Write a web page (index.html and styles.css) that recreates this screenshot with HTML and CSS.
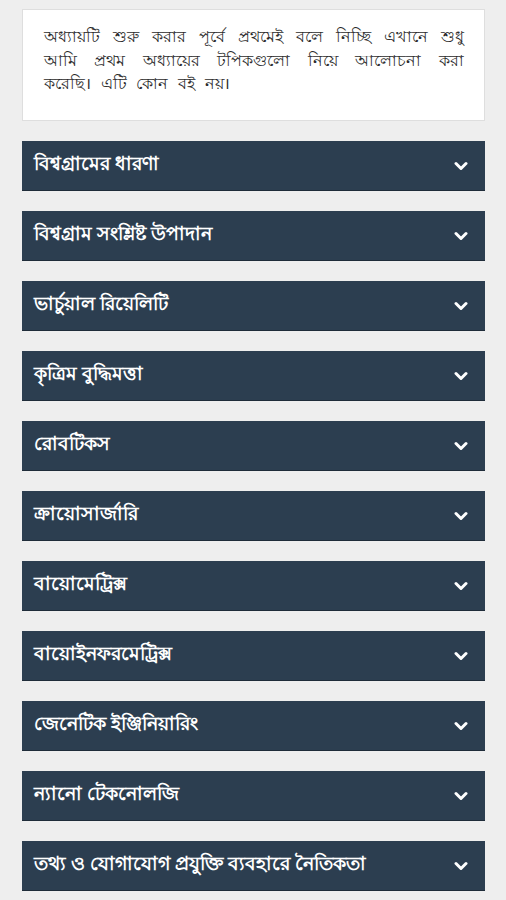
FILE: index.html
```html
<!DOCTYPE html>
<html lang="bn">
<head>
<meta charset="utf-8">
<link rel="stylesheet" href="styles.css">
</head>
<body>
<div class="page">
  <div class="intro">অধ্যায়টি শুরু করার পূর্বে প্রথমেই বলে নিচ্ছি এখানে শুধু আমি প্রথম অধ্যায়ের টপিকগুলো নিয়ে আলোচনা করা করেছি। এটি কোন বই নয়।</div>
  <div class="list">
    <div class="item"><span class="title">বিশ্বগ্রামের ধারণা</span><svg class="chev" viewBox="0 0 14 10"><path d="M2 2.5l5 5 5-5"/></svg></div>
    <div class="item"><span class="title">বিশ্বগ্রাম সংশ্লিষ্ট উপাদান</span><svg class="chev" viewBox="0 0 14 10"><path d="M2 2.5l5 5 5-5"/></svg></div>
    <div class="item"><span class="title">ভার্চুয়াল রিয়েলিটি</span><svg class="chev" viewBox="0 0 14 10"><path d="M2 2.5l5 5 5-5"/></svg></div>
    <div class="item"><span class="title">কৃত্রিম বুদ্ধিমত্তা</span><svg class="chev" viewBox="0 0 14 10"><path d="M2 2.5l5 5 5-5"/></svg></div>
    <div class="item"><span class="title">রোবটিকস</span><svg class="chev" viewBox="0 0 14 10"><path d="M2 2.5l5 5 5-5"/></svg></div>
    <div class="item"><span class="title">ক্রায়োসার্জারি</span><svg class="chev" viewBox="0 0 14 10"><path d="M2 2.5l5 5 5-5"/></svg></div>
    <div class="item"><span class="title">বায়োমেট্রিক্স</span><svg class="chev" viewBox="0 0 14 10"><path d="M2 2.5l5 5 5-5"/></svg></div>
    <div class="item"><span class="title">বায়োইনফরমেট্রিক্স</span><svg class="chev" viewBox="0 0 14 10"><path d="M2 2.5l5 5 5-5"/></svg></div>
    <div class="item"><span class="title">জেনেটিক ইঞ্জিনিয়ারিং</span><svg class="chev" viewBox="0 0 14 10"><path d="M2 2.5l5 5 5-5"/></svg></div>
    <div class="item"><span class="title">ন্যানো টেকনোলজি</span><svg class="chev" viewBox="0 0 14 10"><path d="M2 2.5l5 5 5-5"/></svg></div>
    <div class="item"><span class="title">তথ্য ও যোগাযোগ প্রযুক্তি ব্যবহারে নৈতিকতা</span><svg class="chev" viewBox="0 0 14 10"><path d="M2 2.5l5 5 5-5"/></svg></div>
  </div>
</div>
</body>
</html>
```
FILE: styles.css
```css
html, body {
  margin: 0;
  padding: 0;
  background: #eeeeee;
}
body {
  font-family: "Noto Sans", "Lato", sans-serif;
}
.page {
  padding: 9px 21px 0 22px;
}
.intro {
  background: #ffffff;
  border: 1px solid #dedede;
  padding: 15px 20px 16px 21px;
  font-size: 16px;
  line-height: 23.5px;
  word-spacing: 5.5px;
  color: #2b2b2b;
  text-align: justify;
  min-height: 79px;
}
.list {
  display: flex;
  flex-direction: column;
  gap: 20px;
  margin-top: 20px;
}
.item {
  height: 50px;
  background: #2c3e50;
  border-bottom: 1px solid #1f2c39;
  box-sizing: border-box;
  display: flex;
  align-items: center;
  justify-content: space-between;
  padding: 0 17px 0 12px;
}
.title {
  color: #ffffff;
  font-weight: bold;
  font-size: 19px;
  line-height: 1;
  margin-top: -4px;
}
.chev {
  width: 14px;
  height: 10px;
  fill: none;
  stroke: #ffffff;
  stroke-width: 3;
  stroke-linecap: round;
  stroke-linejoin: round;
}
```
